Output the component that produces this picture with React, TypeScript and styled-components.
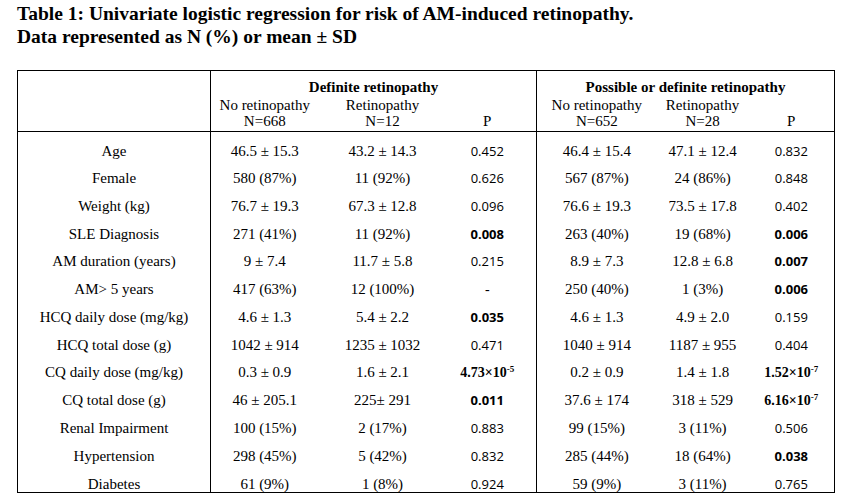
import React from 'react';
import styled, { createGlobalStyle } from 'styled-components';

const GlobalStyle = createGlobalStyle`
  html, body {
    margin: 0;
    padding: 0;
    background: #fff;
  }
`;

const Page = styled.div`
  width: 852px;
  height: 501px;
  padding: 2px 0 0 17px;
  box-sizing: border-box;
  font-family: 'Liberation Serif', 'Times New Roman', serif;
  color: #000;
`;

const Title = styled.h1`
  margin: 0 0 22px;
  font-size: 19.5px;
  line-height: 23px;
  font-weight: bold;
  white-space: nowrap;
`;

const Table = styled.table`
  border-collapse: collapse;
  table-layout: fixed;
  width: 817px;
  border: 1px solid #000;
  font-size: 15px;
`;

const GroupHead = styled.th`
  border-left: 1px solid #000;
  padding: 8px 0 1px;
  height: 17px;
  line-height: 17px;
  font-size: 15px;
  font-weight: bold;
  text-align: center;
  vertical-align: top;
`;

const SubHead = styled.th<{ $divider?: boolean; $padRight?: number }>`
  border-left: ${p => (p.$divider ? '1px solid #000' : 'none')};
  padding: 0 ${p => p.$padRight ?? 0}px 2px 0;
  line-height: 16px;
  font-weight: normal;
  text-align: center;
  vertical-align: bottom;
`;

const Row = styled.tr`
  height: 27.7px;
`;

const Cell = styled.td<{ $divider?: boolean; $padRight?: number }>`
  border-left: ${p => (p.$divider ? '1px solid #000' : 'none')};
  padding: 11px ${p => p.$padRight ?? 0}px 0 0;
  line-height: 16px;
  text-align: center;
  vertical-align: top;
  white-space: nowrap;
`;

const PCell = styled(Cell)<{ $bold?: boolean }>`
  font-family: 'Open Sans', 'Liberation Sans', sans-serif;
  font-size: 13px;
  font-weight: ${p => (p.$bold ? 700 : 400)};
`;

const Sci = styled.span<{ $plain?: boolean }>`
  font-family: 'Liberation Serif', 'Times New Roman', serif;
  font-size: 14px;
  font-weight: ${p => (p.$plain ? 400 : 700)};

  sup {
    font-size: 9px;
    line-height: 0;
    vertical-align: 5px;
  }
`;

const HeadRule = styled.tr`
  border-bottom: 1px solid #000;
`;

type P = { v: string; bold?: boolean; exp?: string; serif?: boolean };

type RowData = {
  label: string;
  a: [string, string, P];
  b: [string, string, P];
};

const rows: RowData[] = [
  { label: 'Age', a: ['46.5 ± 15.3', '43.2 ± 14.3', { v: '0.452' }], b: ['46.4 ± 15.4', '47.1 ± 12.4', { v: '0.832' }] },
  { label: 'Female', a: ['580 (87%)', '11 (92%)', { v: '0.626' }], b: ['567 (87%)', '24 (86%)', { v: '0.848' }] },
  { label: 'Weight (kg)', a: ['76.7 ± 19.3', '67.3 ± 12.8', { v: '0.096' }], b: ['76.6 ± 19.3', '73.5 ± 17.8', { v: '0.402' }] },
  { label: 'SLE Diagnosis', a: ['271 (41%)', '11 (92%)', { v: '0.008', bold: true }], b: ['263 (40%)', '19 (68%)', { v: '0.006', bold: true }] },
  { label: 'AM duration (years)', a: ['9 ± 7.4', '11.7 ± 5.8', { v: '0.215' }], b: ['8.9 ± 7.3', '12.8 ± 6.8', { v: '0.007', bold: true }] },
  { label: 'AM> 5 years', a: ['417 (63%)', '12 (100%)', { v: '-', serif: true }], b: ['250 (40%)', '1 (3%)', { v: '0.006', bold: true }] },
  { label: 'HCQ daily dose (mg/kg)', a: ['4.6 ± 1.3', '5.4 ± 2.2', { v: '0.035', bold: true }], b: ['4.6 ± 1.3', '4.9 ± 2.0', { v: '0.159' }] },
  { label: 'HCQ total dose (g)', a: ['1042 ± 914', '1235 ± 1032', { v: '0.471' }], b: ['1040 ± 914', '1187 ± 955', { v: '0.404' }] },
  { label: 'CQ daily dose (mg/kg)', a: ['0.3 ± 0.9', '1.6 ± 2.1', { v: '4.73×10', exp: '-5', bold: true }], b: ['0.2 ± 0.9', '1.4 ± 1.8', { v: '1.52×10', exp: '-7', bold: true }] },
  { label: 'CQ total dose (g)', a: ['46 ± 205.1', '225± 291', { v: '0.011', bold: true }], b: ['37.6 ± 174', '318 ± 529', { v: '6.16×10', exp: '-7', bold: true }] },
  { label: 'Renal Impairment', a: ['100 (15%)', '2 (17%)', { v: '0.883' }], b: ['99 (15%)', '3 (11%)', { v: '0.506' }] },
  { label: 'Hypertension', a: ['298 (45%)', '5 (42%)', { v: '0.832' }], b: ['285 (44%)', '18 (64%)', { v: '0.038', bold: true }] },
  { label: 'Diabetes', a: ['61 (9%)', '1 (8%)', { v: '0.924' }], b: ['59 (9%)', '3 (11%)', { v: '0.765' }] },
];

const PValue = ({ p, padRight }: { p: P; padRight?: number }) => (
  <PCell $bold={p.bold} $padRight={padRight}>
    {p.exp ? (
      <Sci>
        {p.v}
        <sup>{p.exp}</sup>
      </Sci>
    ) : p.serif ? (
      <Sci $plain>{p.v}</Sci>
    ) : (
      p.v
    )}
  </PCell>
);

export default function App() {
  return (
    <Page>
      <GlobalStyle />
      <Title>
        Table 1: Univariate logistic regression for risk of AM-induced retinopathy.
        <br />
        Data represented as N (%) or mean ± SD
      </Title>
      <Table>
        <colgroup>
          <col style={{ width: 193 }} />
          <col style={{ width: 108 }} />
          <col style={{ width: 128 }} />
          <col style={{ width: 90 }} />
          <col style={{ width: 120 }} />
          <col style={{ width: 92 }} />
          <col style={{ width: 86 }} />
        </colgroup>
        <thead>
          <tr>
            <th rowSpan={2} />
            <GroupHead colSpan={3}>Definite retinopathy</GroupHead>
            <GroupHead colSpan={3}>Possible or definite retinopathy</GroupHead>
          </tr>
          <HeadRule>
            <SubHead $divider>
              No retinopathy
              <br />
              N=668
            </SubHead>
            <SubHead>
              Retinopathy
              <br />
              N=12
            </SubHead>
            <SubHead $padRight={8}>P</SubHead>
            <SubHead $divider>
              No retinopathy
              <br />
              N=652
            </SubHead>
            <SubHead>
              Retinopathy
              <br />
              N=28
            </SubHead>
            <SubHead>P</SubHead>
          </HeadRule>
        </thead>
        <tbody>
          {rows.map(r => (
            <Row key={r.label}>
              <Cell>{r.label}</Cell>
              <Cell $divider>{r.a[0]}</Cell>
              <Cell>{r.a[1]}</Cell>
              <PValue p={r.a[2]} padRight={8} />
              <Cell $divider>{r.b[0]}</Cell>
              <Cell>{r.b[1]}</Cell>
              <PValue p={r.b[2]} />
            </Row>
          ))}
        </tbody>
      </Table>
    </Page>
  );
}
